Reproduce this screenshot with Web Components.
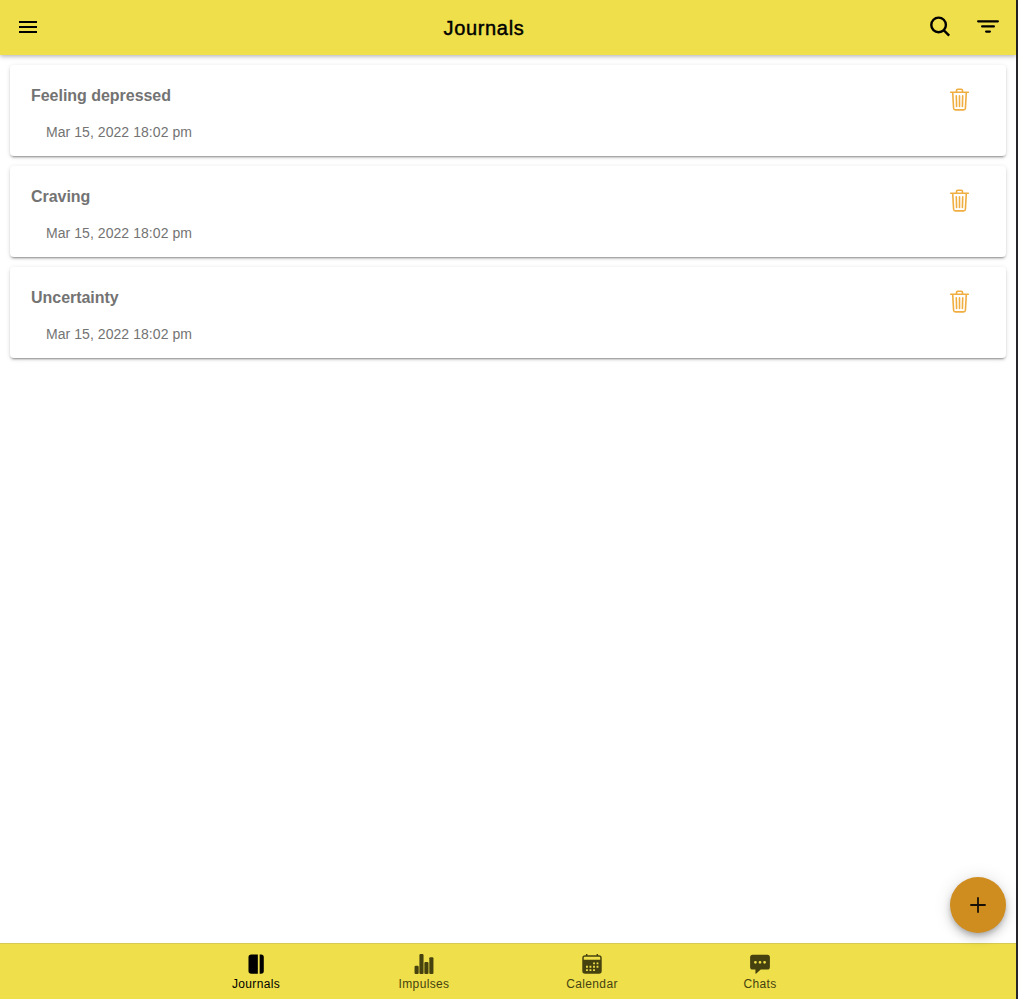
<!DOCTYPE html>
<html lang="en"><head><meta charset="utf-8"><title>Journals</title>
<style>html,body{margin:0;height:100%;background:#fff;font-family:"Liberation Sans",Arial,sans-serif}body{overflow:hidden}</style></head>
<body><journal-app></journal-app>
<script>
const icons={
menu:'<path d="M3 6h18v2H3zM3 11h18v2H3zM3 16h18v2H3z"/>',
search:'<g fill="none" stroke="currentColor" stroke-width="2.4"><circle cx="10.6" cy="9.9" r="7.3"/><path d="M15.6 15.1l5.6 5.6"/></g>',
filter:'<path d="M2.1 6.3h19.8M6.1 11.4h11.8M10.1 16.6h3.8" fill="none" stroke="currentColor" stroke-width="2.2" stroke-linecap="round"/>',
trash:'<g fill="none" stroke="currentColor" stroke-width="1.6" stroke-linecap="round"><path d="M3.7 5.3h17.6M9.5 5.1V3.4q0-1.2 1.2-1.2h3.6q1.2 0 1.2 1.2v1.7M5.7 5.5l.9 15.7q.1 1.7 1.8 1.7h8.2q1.7 0 1.8-1.7l.9-15.7M12.5 8.9v10.6M9.3 8.9l.3 10.6M15.7 8.9l-.3 10.6"/></g>',
plus:'<path d="M12 4.3v15.4M4.3 12h15.4" fill="none" stroke="currentColor" stroke-width="1.8"/>',
journal:'<path d="M7 1.5h7v21H7q-3.2 0-3.2-3v-15q0-3 3.2-3zM16 1.5h1.5q3 0 3 3v15q0 3-3 3H16z"/>',
chart:'<rect x="1.7" y="14" width="4.5" height="9" rx="1.2"/><rect x="7" y="1" width="4.5" height="22" rx="1.2"/><rect x="12.4" y="9.8" width="4.5" height="13.2" rx="1.2"/><rect x="17.8" y="4.6" width="4.5" height="18.4" rx="1.2"/>',
calendar:'<path fill-rule="evenodd" d="M5.4 1H7v1.5h10V1h1.6v1.5h1q3 0 3 3v14q0 3-3 3H4.4q-3 0-3-3v-14q0-3 3-3h1zM3 5.2v2.2h18V5.2q0-1-1-1H4q-1 0-1 1zM13.2 10.3v2h2v-2zM17 10.3v2h2v-2zM5.5 14v2h2v-2zM9.3 14v2h2v-2zM13.2 14v2h2v-2zM17 14v2h2v-2zM5.5 17.7v2h2v-2zM9.3 17.7v2h2v-2zM13.2 17.7v2h2v-2z"/>',
chat:'<path fill-rule="evenodd" d="M4 2h16q2.8 0 2.8 2.8v10.4q0 2.8-2.8 2.8h-7.2L8 22.3q-1 .7-1-.5V18H4q-2.8 0-2.8-2.8V4.8Q1.2 2 4 2zM7 8.6a1.5 1.5 0 100 3 1.5 1.5 0 000-3zM12 8.6a1.5 1.5 0 100 3 1.5 1.5 0 000-3zM17 8.6a1.5 1.5 0 100 3 1.5 1.5 0 000-3z"/>'};
function define(name,render){customElements.define(name,class extends HTMLElement{connectedCallback(){if(!this.shadowRoot)this.attachShadow({mode:'open'}).innerHTML=render(this)}})}
define('app-icon',e=>`<style>:host{display:block;width:24px;height:24px;flex:none}svg{display:block;width:100%;height:100%;overflow:visible}</style><svg viewBox="0 0 24 24" fill="currentColor">${icons[e.getAttribute('name')]}</svg>`);
define('app-header',()=>`<style>:host{display:grid;grid-template-columns:1fr auto 1fr;height:55px;flex:none;background:#eedf4b;color:#000;box-shadow:0 1px 5px rgba(0,0,0,.34);box-sizing:border-box;padding:0 16px;z-index:1}
.start{padding-top:15px}.end{display:flex;justify-content:flex-end;gap:24px;padding-top:15px}h1{font-size:20px;line-height:24px;font-weight:400;margin:16px 48px 0 0;letter-spacing:.65px;-webkit-text-stroke:.45px #000}:host{grid-template-columns:minmax(0,1fr) auto minmax(0,1fr)}h1{margin-right:0;transform:translateX(-24px)}</style><div class="start"><app-icon name="menu"></app-icon></div><h1><slot></slot></h1><div class="end"><app-icon name="search"></app-icon><app-icon name="filter"></app-icon></div>`);
define('journal-card',()=>`<style>:host{display:flex;justify-content:space-between;box-sizing:border-box;height:91px;padding:21px 35px 0 21px;border-radius:4px;background:#fff;color:#737373;box-shadow:0 3px 1px -2px rgba(0,0,0,.2),0 2px 2px rgba(0,0,0,.14),0 1px 5px rgba(0,0,0,.12)}
h2{font-size:16px;line-height:20px;margin:0;font-weight:700;letter-spacing:-.03px}p{font-size:14px;line-height:18px;margin:17px 0 0 15px;letter-spacing:.06px}app-icon{color:#f0ad40;margin-top:1px}</style><div><h2><slot name="title"></slot></h2><p><slot></slot></p></div><app-icon name="trash"></app-icon>`);
define('tab-item',e=>`<style>:host{display:flex;flex-direction:column;align-items:center;width:168px;padding-top:9px;box-sizing:border-box;color:#46420f}:host([active]){color:#000}app-icon{width:22px;height:22px}span{font-size:12px;line-height:16px;margin-top:1px;letter-spacing:.36px}</style><app-icon name="${e.getAttribute('icon')}"></app-icon><span><slot></slot></span>`);
define('tab-bar',()=>`<style>:host{display:flex;justify-content:center;box-sizing:border-box;height:56px;flex:none;background:#eedf4b;border-top:1px solid #d7ca53}</style><slot></slot>`);
define('add-button',()=>`<style>:host{position:absolute;right:10px;bottom:10px;width:56px;height:56px;border-radius:50%;display:grid;place-items:center;background:#cf8c1f;color:#171006;box-shadow:0 3px 5px -1px rgba(0,0,0,.2),0 6px 10px rgba(0,0,0,.14),0 1px 18px rgba(0,0,0,.12)}</style><app-icon name="plus"></app-icon>`);
define('journal-app',()=>`<style>:host{display:flex;flex-direction:column;height:100vh;box-sizing:border-box;border-right:2px solid #25252b}main{flex:1;position:relative;display:flex;flex-direction:column;gap:10px;padding:10px}</style>
<app-header>Journals</app-header><main>
<journal-card><span slot="title">Feeling depressed</span>Mar 15, 2022 18:02 pm</journal-card>
<journal-card><span slot="title">Craving</span>Mar 15, 2022 18:02 pm</journal-card>
<journal-card><span slot="title">Uncertainty</span>Mar 15, 2022 18:02 pm</journal-card>
<add-button></add-button></main><tab-bar><tab-item icon="journal" active>Journals</tab-item><tab-item icon="chart">Impulses</tab-item><tab-item icon="calendar">Calendar</tab-item><tab-item icon="chat">Chats</tab-item></tab-bar>`);
</script></body></html>
